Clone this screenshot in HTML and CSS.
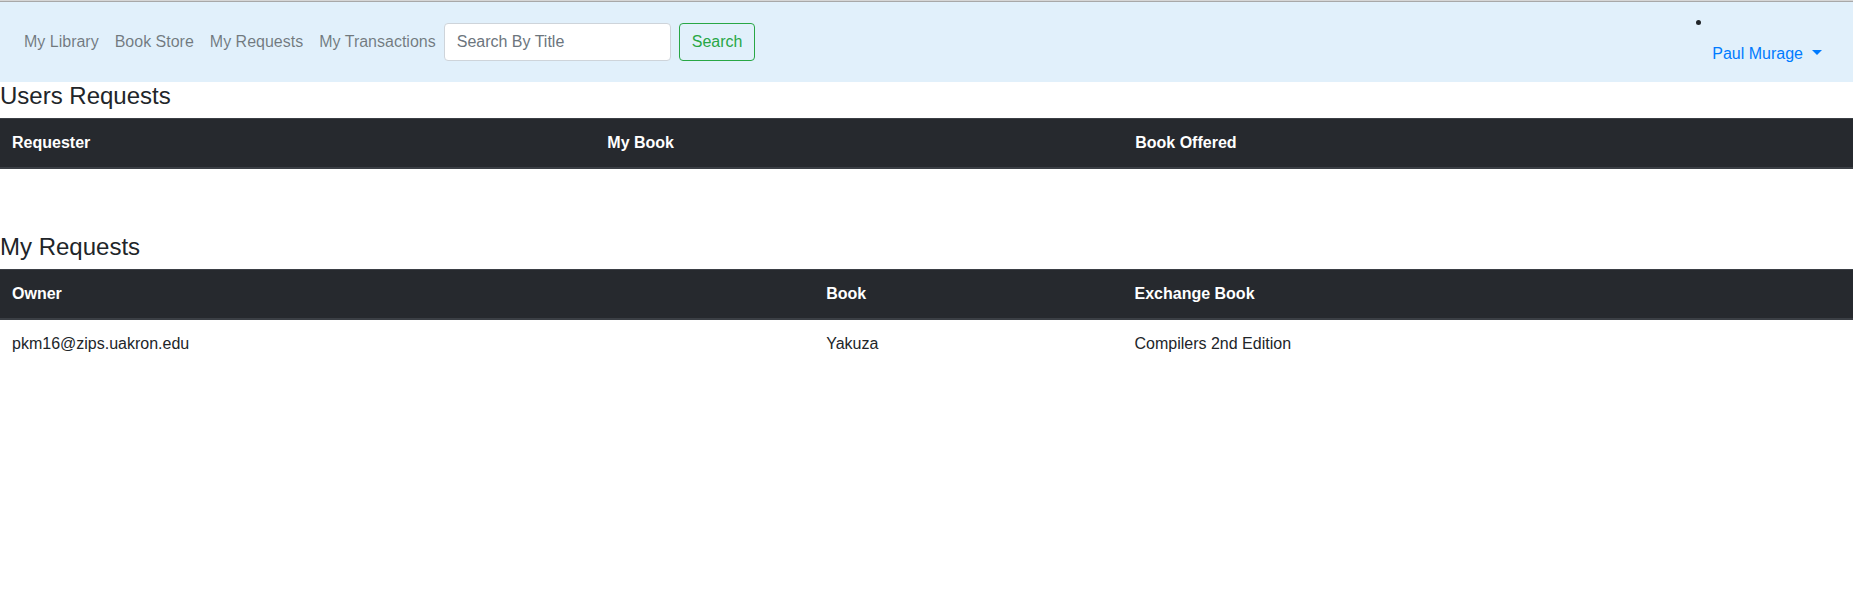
FILE: index.html
```html
<!DOCTYPE html>
<html lang="en">
<head>
<meta charset="utf-8">
<title>Users Requests</title>
<link rel="stylesheet" href="styles.css">
</head>
<body>
<div class="top-line"></div>
<nav class="navbar">
  <div class="nav-left">
    <a class="nav-link" href="#">My Library</a>
    <a class="nav-link" href="#">Book Store</a>
    <a class="nav-link" href="#">My Requests</a>
    <a class="nav-link" href="#">My Transactions</a>
    <form class="search-form">
      <input class="search-input" type="search" placeholder="Search By Title">
      <button class="search-btn" type="button">Search</button>
    </form>
  </div>
  <div class="user-area">
    <ul class="user-list"><li class="user-item"></li></ul>
    <a class="user-toggle" href="#">Paul Murage</a>
  </div>
</nav>

<h4 class="section-title">Users Requests</h4>
<table class="data-table">
  <thead>
    <tr><th>Requester</th><th>My Book</th><th>Book Offered</th></tr>
  </thead>
  <tbody></tbody>
</table>

<div class="section-gap"></div>

<h4 class="section-title">My Requests</h4>
<table class="data-table">
  <thead>
    <tr><th>Owner</th><th>Book</th><th>Exchange Book</th></tr>
  </thead>
  <tbody>
    <tr><td>pkm16@zips.uakron.edu</td><td>Yakuza</td><td>Compilers 2nd Edition</td></tr>
  </tbody>
</table>
</body>
</html>
```
FILE: styles.css
```css
* { box-sizing: border-box; }

body {
  margin: 0;
  font-family: "Liberation Sans", Arial, sans-serif;
  font-size: 16px;
  line-height: 1.5;
  color: #212529;
  background: #fff;
}

.top-line {
  height: 2px;
  border-top: 1px solid #d6d6d6;
  border-bottom: 1px solid #a8a8a8;
}

.navbar {
  display: flex;
  align-items: center;
  justify-content: space-between;
  padding: 8px 16px;
  background: #e1f0fb;
}

.nav-left {
  display: flex;
  align-items: center;
}

.nav-link {
  display: block;
  padding: 8px;
  color: rgba(0, 0, 0, 0.5);
  text-decoration: none;
}

.search-form {
  display: flex;
  align-items: center;
}

.search-input {
  width: 227px;
  height: 38px;
  margin-right: 8px;
  padding: 6px 12px;
  font-family: inherit;
  font-size: 16px;
  line-height: 1.5;
  color: #495057;
  background: #fff;
  border: 1px solid #ced4da;
  border-radius: 4px;
}

.search-input::placeholder { color: #6c757d; }

.search-btn {
  height: 38px;
  padding: 6px 12px;
  font-family: inherit;
  font-size: 16px;
  line-height: 1.5;
  color: #28a745;
  background: transparent;
  border: 1px solid #28a745;
  border-radius: 4px;
}

.user-area {
  margin-right: 15px;
}

.user-list {
  margin: 0;
  padding: 0;
  list-style: disc outside;
  color: #212529;
}

.user-item {
  height: 24px;
}

.user-toggle {
  display: block;
  padding: 8px 0;
  color: #007bff;
  text-decoration: none;
}

.user-toggle::after {
  content: "";
  display: inline-block;
  margin-left: 9px;
  vertical-align: 4px;
  border-top: 5px solid;
  border-right: 5px solid transparent;
  border-left: 5px solid transparent;
  border-bottom: 0;
}

.section-title {
  margin: 0 0 7px;
  font-size: 24px;
  font-weight: 500;
  line-height: 1.2;
  color: #212529;
}

.data-table {
  width: 100%;
  margin-bottom: 16px;
  border-collapse: collapse;
  color: #212529;
}

.data-table th {
  padding: 12px;
  text-align: left;
  vertical-align: bottom;
  font-weight: bold;
  color: #fff;
  background: #26292e;
  border-top: 1px solid #3b3f45;
  border-bottom: 2px solid #3b3f45;
}

.data-table td {
  padding: 12px;
  vertical-align: top;
  border-top: 1px solid #dee2e6;
}

.section-gap {
  height: 48px;
}
```
